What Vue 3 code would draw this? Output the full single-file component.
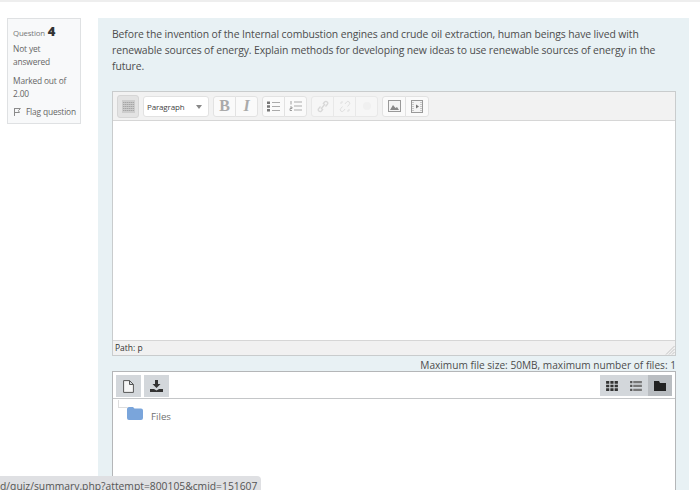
<script setup>
const groups = [
  [{ id: 'b', t: 'B' }, { id: 'i', t: 'I' }],
  [{ id: 'ul' }, { id: 'ol' }],
  [{ id: 'link' }, { id: 'unlink' }, { id: 'x' }],
  [{ id: 'img' }, { id: 'media' }]
]
</script>

<template>
  <div class="page">
    <div class="topline"></div>
    <div class="que">
      <aside class="info">
        <div class="qno">Question <b>4</b></div>
        <div class="state">Not yet answered</div>
        <div class="grade">Marked out of 2.00</div>
        <div class="flag">
          <svg width="9" height="10" viewBox="0 0 9 10"><path d="M1.5 1v8M1.5 1.500h6L5.500 3.500l1 2h-5" fill="none" stroke="#888" stroke-width="1"/></svg>
          <span>Flag question</span>
        </div>
      </aside>
      <main class="panel">
        <p class="qtext">Before the invention of the Internal combustion engines and crude oil extraction, human beings have lived with renewable sources of energy. Explain methods for developing new ideas to use renewable sources of energy in the future.</p>
        <section class="editor">
          <div class="toolbar">
            <button class="tb toggle">
              <svg width="13" height="13" viewBox="0 0 13 13"><rect width="13" height="13" fill="#cdcdcd"/><path d="M1 2.500h11M1 4.500h11M1 6.500h11M1 8.500h11M1 10.500h11" stroke="#a6a6a6" stroke-dasharray="1.500 .5"/></svg>
            </button>
            <div class="tb select"><span>Paragraph</span><i class="caret"></i></div>
            <div v-for="(g, n) in groups" :key="n" class="group">
              <button v-for="b in g" :key="b.id" class="tb btn" :class="{ faded: n === 2, wide: n === 3 }">
                <span v-if="b.t" class="letter" :class="b.id">{{ b.t }}</span>
                <svg v-else-if="b.id === 'ul'" width="13" height="11" viewBox="0 0 13 11"><path d="M5 1.500h8M5 5.500h8M5 9.500h8" stroke="#aaa"/><path d="M0 .5h3v2.500H0zM0 4.300h3v2.500H0zM0 8h3v2.500H0z" fill="#777"/></svg>
                <svg v-else-if="b.id === 'ol'" width="13" height="12" viewBox="0 0 13 12"><path d="M5 2h8M5 6h8M5 10h8" stroke="#aaa"/><path d="M2 1v3.500M1 7h2v1.500H1V10.500h2" stroke="#888" fill="none" stroke-width="0.800"/></svg>
                <svg v-else-if="b.id === 'link'" width="12" height="13" viewBox="0 0 12 13"><path d="M4 9l4-5M3.500 6.500L1.800 8.500a1.800 1.800 0 0 0 2.600 2.500L6 9M6 4l1.600-2a1.800 1.800 0 0 1 2.600 2.500L8.500 6.500" stroke="#d8d8d8" stroke-width="1.300" fill="none"/></svg>
                <svg v-else-if="b.id === 'unlink'" width="12" height="13" viewBox="0 0 12 13"><path d="M3.500 6.500L1.800 8.500a1.800 1.800 0 0 0 2.600 2.500L6 9M6 4l1.600-2a1.800 1.800 0 0 1 2.600 2.500L8.500 6.500M1 3h2M3 1v2M9 12v-2M11 10H9" stroke="#e0e0e0" fill="none"/></svg>
                <svg v-else-if="b.id === 'x'" width="10" height="10" viewBox="0 0 10 10"><circle cx="5" cy="5" r="4" fill="#f0f0f0"/></svg>
                <svg v-else-if="b.id === 'img'" width="13" height="12" viewBox="0 0 13 12"><rect x="0.500" y="0.500" width="12" height="11" fill="#f4f4f4" stroke="#999"/><path d="M2 10l3-5 2.500 3L9 7l2 3z" fill="#888"/></svg>
                <svg v-else width="12" height="13" viewBox="0 0 12 13"><rect x="0.500" y="0.500" width="11" height="12" fill="#f4f4f4" stroke="#999"/><path d="M2 2v9M10 2v9" stroke="#999" stroke-dasharray="1 1"/><path d="M5 4.500v4l3-2z" fill="#777"/></svg>
              </button>
            </div>
          </div>
          <div class="edit-area"></div>
          <div class="pathbar">
            <span>Path: p</span>
            <svg class="grip" width="10" height="10" viewBox="0 0 10 10"><path d="M9.500 1L1 9.500M9.500 4L4 9.500M9.500 7L7 9.500" stroke="#c4c4c4"/></svg>
          </div>
        </section>
        <div class="limit">Maximum file size: 50MB, maximum number of files: 1</div>
        <section class="files">
          <div class="files-bar">
            <div class="files-left">
              <button class="fb">
                <svg width="11" height="13" viewBox="0 0 11 13"><path d="M.6.6h6l3.800 3.800v8h-9.800zM6.500.6v3.900h3.900" fill="#f6f6f6" stroke="#555" stroke-width="1"/></svg>
              </button>
              <button class="fb">
                <svg width="13" height="12" viewBox="0 0 13 12"><path d="M5 0h3v4h2.500L6.500 8 2.500 4H5zM0 9h4l2.500 1.500L9 9h4v3H0z" fill="#333"/></svg>
              </button>
            </div>
            <div class="files-right">
              <button class="fv">
                <svg width="12" height="10" viewBox="0 0 13 11"><path d="M0 0h3.500v3H0zM4.700 0h3.500v3H4.700zM9.400 0H13v3H9.400zM0 4h3.500v3H0zM4.700 4h3.500v3H4.700zM9.400 4H13v3H9.400zM0 8h3.500v3H0zM4.700 8h3.500v3H4.700zM9.400 8H13v3H9.400z" fill="#333"/></svg>
              </button>
              <button class="fv">
                <svg width="12" height="10" viewBox="0 0 13 11"><path d="M0 0h2.500v2.500H0zM0 4.200h2.500v2.500H0zM0 8.500h2.500V11H0z" fill="#555"/><path d="M3.500 0H13v2.500H3.500zM3.500 4.200H13v2.500H3.500zM3.500 8.500H13V11H3.500z" fill="#777"/></svg>
              </button>
              <button class="fv on">
                <svg width="12" height="10" viewBox="0 0 12 10"><path d="M0 0h5l1 2h6v8H0z" fill="#222"/></svg>
              </button>
            </div>
          </div>
          <div class="tree">
            <i class="elbow"></i>
            <svg width="16" height="13" viewBox="0 0 16 13"><path d="M2 0h4l1.500 1.500H14a2 2 0 0 1 2 2V11a2 2 0 0 1-2 2H2a2 2 0 0 1-2-2V2a2 2 0 0 1 2-2z" fill="#7aa5db"/></svg>
            <span class="tree-label">Files</span>
          </div>
        </section>
      </main>
    </div>
    <div class="status">d/quiz/summary.php?attempt=800105&amp;cmid=151607</div>
  </div>
</template>

<style>
html, body { margin: 0; background: #fff; overflow: hidden; }
</style>

<style scoped>
.page {
  position: relative;
  width: 700px;
  height: 490px;
  overflow: hidden;
  background: #fff;
  font-family: "Open Sans", "Noto Sans", sans-serif;
  color: #444;
}
.topline { height: 2px; background: #eee; }
.que {
  display: flex;
  align-items: flex-start;
  gap: 17px;
  padding: 16px 11px 0 7px;
}
.info {
  box-sizing: border-box;
  width: 74px;
  height: 106px;
  flex: none;
  padding: 6px 4px 0 5px;
  background: #f8f9fa;
  border: 1px solid #dfe1e3;
  font-size: 8.400px;
  line-height: 12.500px;
  color: #666;
  letter-spacing: -0.150px;
}
.qno { height: 14px; font-size: 7.800px; color: #777; }
.qno b { font-size: 13px; color: #333; font-weight: 800; margin-left: 1px; letter-spacing: 0; }
.state { margin-top: 4px; }
.grade { margin-top: 7px; }
.flag { display: flex; align-items: center; gap: 4px; margin-top: 6px; white-space: nowrap; }
.panel {
  box-sizing: border-box;
  width: 591px;
  height: 480px;
  flex: none;
  padding: 8px 13px 0 14px;
  background: #e8f1f4;
}
.qtext {
  margin: 0;
  font-size: 10.400px;
  line-height: 16px;
  color: #4d4d4d;
  width: 552px;
  height: 65px;
  letter-spacing: -0.100px;
}
.editor {
  box-sizing: border-box;
  width: 564px;
  border: 1px solid #c9cccd;
  background: #fff;
}
.toolbar {
  display: flex;
  align-items: center;
  gap: 4px;
  box-sizing: border-box;
  height: 29px;
  padding: 0 4px;
  background: #f2f2f2;
  border-bottom: 1px solid #d6d6d6;
}
.tb {
  box-sizing: border-box;
  height: 21px;
  padding: 0;
  display: flex;
  align-items: center;
  justify-content: center;
  background: #fafafa;
  border: 1px solid #e2e2e2;
}
.toggle { width: 22px; height: 23px; background: #e3e3e3; border-color: #d6d6d6; border-radius: 3px; }
.select {
  width: 66px;
  justify-content: flex-start;
  padding-left: 3px;
  border-radius: 3px;
  font-size: 8px;
  color: #444;
  letter-spacing: -0.150px;
  background: #fff;
  position: relative;
}
.caret {
  position: absolute;
  right: 6px;
  top: 8px;
  border: 3px solid transparent;
  border-top: 4px solid #888;
  border-bottom: 0;
}
.group { display: flex; border-radius: 3px; }
.btn { width: 23px; margin-left: -1px; }
.btn.wide { width: 24px; }
.btn:first-child { margin-left: 0; border-radius: 3px 0 0 3px; }
.btn:last-child { border-radius: 0 3px 3px 0; }
.btn.faded { background: #f6f6f6; border-color: #e8e8e8; }
.letter { font-family: "Liberation Serif", serif; font-size: 16px; color: #aaa; }
.letter.b { font-weight: 700; }
.letter.i { font-style: italic; font-weight: 700; }
.edit-area { height: 219px; background: #fff; }
.pathbar {
  position: relative;
  box-sizing: border-box;
  height: 15px;
  padding-left: 2px;
  background: #f1f1f1;
  border-top: 1px solid #d6d6d6;
  font-size: 8.500px;
  line-height: 13px;
  color: #333;
}
.grip { position: absolute; right: 0; bottom: 0; }
.limit {
  width: 564px;
  height: 15px;
  font-size: 10.150px;
  line-height: 18px;
  text-align: right;
  color: #4d4d4d;
  white-space: nowrap;
}
.files {
  box-sizing: border-box;
  width: 564px;
  height: 120px;
  background: #fff;
  border: 1px solid #b4b6b8;
  border-bottom: 0;
}
.files-bar {
  display: flex;
  justify-content: space-between;
  box-sizing: border-box;
  height: 27px;
  padding: 3px 3px 2px 3px;
  border-bottom: 1px solid #c4c6c8;
}
.files-left { display: flex; gap: 3px; }
.files-right { display: flex; }
.fb, .fv {
  height: 22px;
  padding: 0;
  border: 0;
  display: flex;
  align-items: center;
  justify-content: center;
  background: #d3d7db;
}
.fb { width: 25px; }
.fv { width: 24px; height: 21px; }
.fv.on { background: #b9bdc1; }
.tree {
  position: relative;
  display: flex;
  align-items: center;
  gap: 8px;
  height: 27px;
  padding-left: 14px;
  margin-top: 1px;
  font-size: 9.700px;
  color: #707070;
}
.tree-label { margin-top: 6px; }
.elbow {
  position: absolute;
  left: 5px;
  top: 0;
  width: 9px;
  height: 7px;
  border-left: 1px solid #ddd;
  border-bottom: 1px solid #ddd;
}
.status {
  position: absolute;
  left: 0;
  bottom: 0;
  box-sizing: border-box;
  width: 261px;
  height: 14px;
  background: #dfe0e3;
  border-radius: 0 4px 0 0;
  font-size: 10.320px;
  line-height: 21px;
  color: #555;
  white-space: nowrap;
  overflow: hidden;
}
</style>
